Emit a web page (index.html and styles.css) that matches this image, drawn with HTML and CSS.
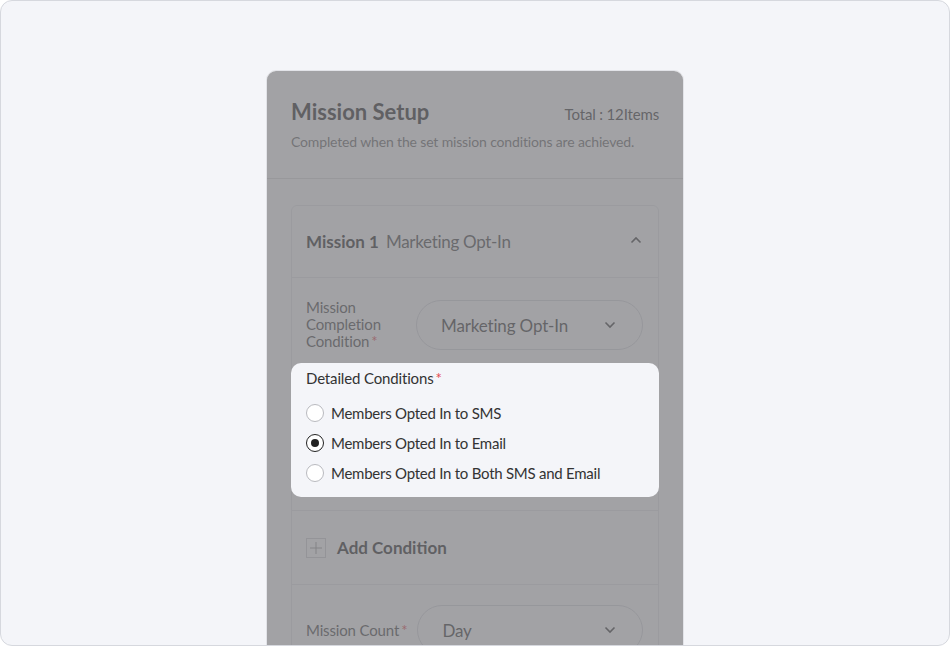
FILE: index.html
```html
<!DOCTYPE html>
<html lang="en">
<head>
    <meta charset="UTF-8">
    <meta name="viewport" content="width=device-width, initial-scale=1.0">
    <title>Mission Setup</title>
    <link rel="stylesheet" href="styles.css">
</head>
<body>
    <div class="frame">
        <div class="card">
            <div class="dim"></div>

            <div class="card-head">
                <div class="head-row">
                    <h1 class="title">Mission Setup</h1>
                    <span class="total">Total : 12Items</span>
                </div>
                <p class="subtitle">Completed when the set mission conditions are achieved.</p>
            </div>

            <div class="card-body">
                <div class="mission">
                    <div class="mission-head">
                        <div class="mission-name"><b>Mission 1</b> Marketing Opt-In</div>
                        <svg class="chev" width="12" height="8" viewBox="0 0 12 8"><path d="M1.5 6.5 L6 2 L10.5 6.5" fill="none" stroke="#333" stroke-width="1.6"/></svg>
                    </div>

                    <div class="field">
                        <label class="field-label">Mission Completion Condition<span class="req">*</span></label>
                        <div class="select">
                            <span>Marketing Opt-In</span>
                            <svg width="12" height="8" viewBox="0 0 12 8"><path d="M1.5 1.5 L6 6 L10.5 1.5" fill="none" stroke="#333" stroke-width="1.6"/></svg>
                        </div>
                    </div>

                    <!-- highlighted step, sits above the dim layer -->
                    <div class="detail">
                        <div class="detail-label">Detailed Conditions<span class="req">*</span></div>
                        <label class="radio"><span class="dot"></span>Members Opted In to SMS</label>
                        <label class="radio checked"><span class="dot"></span>Members Opted In to Email</label>
                        <label class="radio"><span class="dot"></span>Members Opted In to Both SMS and Email</label>
                    </div>

                    <div class="add-row">
                        <span class="plus-box">
                            <svg width="20" height="20" viewBox="0 0 20 20"><path d="M10 4 V16 M4 10 H16" stroke="#999" stroke-width="1"/></svg>
                        </span>
                        <span class="add-text">Add Condition</span>
                    </div>

                    <div class="field count">
                        <label class="field-label">Mission Count<span class="req">*</span></label>
                        <div class="select">
                            <span>Day</span>
                            <svg width="12" height="8" viewBox="0 0 12 8"><path d="M1.5 1.5 L6 6 L10.5 1.5" fill="none" stroke="#333" stroke-width="1.6"/></svg>
                        </div>
                    </div>
                </div>
            </div>
        </div>
    </div>
</body>
</html>
```

FILE: styles.css
```css
body {
    margin: 0;
    font-family: 'Lato', 'Noto Sans', sans-serif;
    color: #222;
    letter-spacing: -0.15px;
}
.frame {
    width: 950px;
    height: 646px;
    box-sizing: border-box;
    border: 1px solid #d6d8de;
    border-radius: 12px;
    background-color: #f4f5f9;
    overflow: hidden;
    display: flex;
    justify-content: center;
    padding-top: 69px;
}
.card {
    position: relative;
    width: 418px;
    height: 700px;
    box-sizing: border-box;
    border: 1px solid #e2e3e8;
    border-radius: 10px 10px 0 0;
    background-color: #fff;
    overflow: hidden;
}
.dim {
    position: absolute;
    top: 0;
    left: 0;
    width: 100%;
    height: 100%;
    background-color: rgba(122, 123, 127, 0.7);
    z-index: 1;
}
.card-head {
    padding: 27px 24px 26px;
    border-bottom: 1px solid #ddd;
}
.head-row {
    display: flex;
    justify-content: space-between;
    align-items: baseline;
}
.title {
    margin: 0;
    font-size: 22px;
    line-height: 28px;
    font-weight: 700;
    letter-spacing: 0;
}
.total {
    font-size: 15px;
    color: #333;
}
.subtitle {
    margin: 6px 0 0;
    font-size: 14px;
    line-height: 20px;
    color: #666;
}
.card-body {
    padding: 26px 24px;
}
.mission {
    border: 1px solid #e6e7ea;
    border-radius: 6px;
}
.mission-head {
    height: 71px;
    padding: 0 16px 0 14px;
    display: flex;
    align-items: center;
    justify-content: space-between;
    border-bottom: 1px solid #e6e7ea;
}
.mission-name {
    font-size: 17px;
    color: #444;
    letter-spacing: -0.3px;
}
.mission-name b {
    color: #222;
    margin-right: 3px;
    letter-spacing: 0;
}
.chev {
    margin-top: -4px;
}
.field {
    display: flex;
    align-items: center;
    gap: 10px;
    padding: 21px 15px 0 14px;
}
.field-label {
    flex: 0 0 100px;
    font-size: 15px;
    line-height: 17px;
    color: #444;
}
.req {
    color: #e5484d;
    margin-left: 2px;
}
.select {
    flex: 1;
    height: 50px;
    box-sizing: border-box;
    border: 1px solid #d8d9de;
    border-radius: 25px;
    padding: 0 26px 0 24px;
    display: flex;
    align-items: center;
    justify-content: space-between;
    font-size: 17px;
    color: #333;
}
.select span {
    margin-top: 1px;
}
.detail {
    position: relative;
    z-index: 2;
    margin: 13px -1px 0;
    padding: 5px 15px 9px;
    background-color: #f4f5f9;
    border-radius: 10px;
}
.detail-label {
    font-size: 15px;
    line-height: 20px;
    color: #333;
    margin-bottom: 10px;
}
.radio {
    display: flex;
    align-items: center;
    gap: 7px;
    height: 30px;
    font-size: 15px;
    color: #333;
    letter-spacing: -0.25px;
}
.dot {
    width: 18px;
    height: 18px;
    box-sizing: border-box;
    border: 1px solid #b9babf;
    border-radius: 50%;
    background-color: #fff;
    display: flex;
    align-items: center;
    justify-content: center;
}
.radio.checked .dot {
    border: 1.5px solid #222;
}
.radio.checked .dot::after {
    content: '';
    width: 8px;
    height: 8px;
    border-radius: 50%;
    background-color: #222;
}
.add-row {
    margin-top: 13px;
    height: 73px;
    padding: 0 14px;
    display: flex;
    align-items: center;
    gap: 11px;
    border-top: 1px solid #e6e7ea;
    border-bottom: 1px solid #e6e7ea;
}
.plus-box {
    width: 20px;
    height: 20px;
    box-sizing: border-box;
    border: 1px solid #cfd0d4;
    display: flex;
    align-items: center;
    justify-content: center;
}
.plus-box svg {
    flex: none;
}
.add-text {
    font-size: 17px;
    font-weight: 700;
    color: #222;
    letter-spacing: 0;
}
.field.count {
    padding-top: 20px;
}
.count .field-label {
    line-height: 20px;
    white-space: nowrap;
}
```
